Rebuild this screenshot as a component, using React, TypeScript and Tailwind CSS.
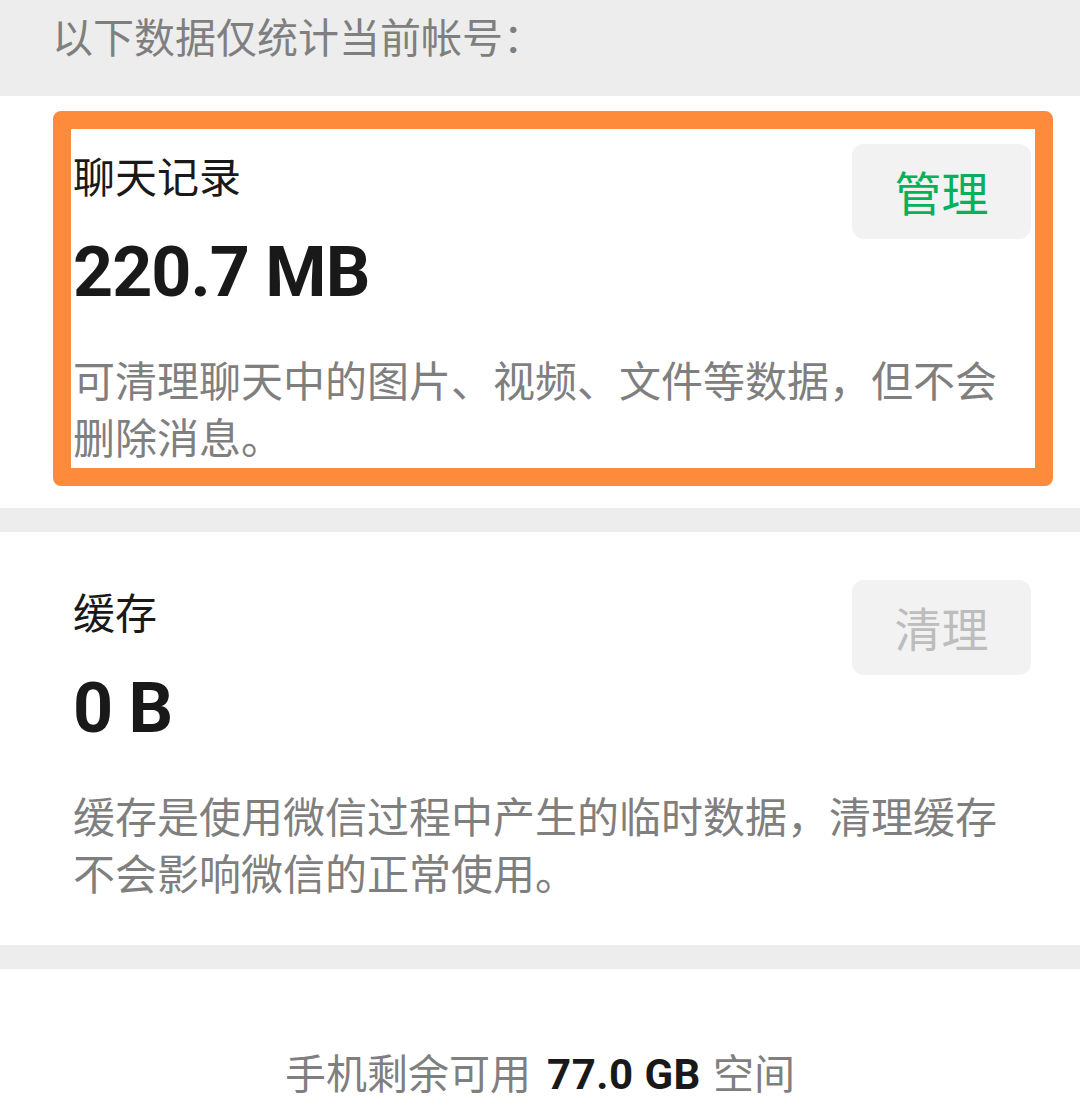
import React from "react";

const cjk = { fontFamily: '"Noto Sans CJK SC", "Noto Sans", sans-serif' };
const num = { fontFamily: 'Roboto, "Noto Sans CJK SC", sans-serif' };

function Section({
  title,
  value,
  desc,
  button,
  active,
  height,
  children,
}: {
  title: string;
  value: string;
  desc: string;
  button: string;
  active: boolean;
  height: string;
  children?: React.ReactNode;
}) {
  return (
    <div className={`relative bg-white pt-[48px] pl-[73px] pr-[49px] ${height}`}>
      <div className="flex items-start justify-between">
        <div className="pt-[3px]">
          <div className="text-[42px] leading-[56px] text-[#191919]" style={cjk}>
            {title}
          </div>
          <div
            className="mt-[29px] text-[70px] leading-[80px] font-bold tracking-[-1px] text-[#191919]"
            style={num}
          >
            {value}
          </div>
        </div>
        <button
          className={`flex h-[95px] w-[179px] items-center justify-center rounded-[12px] bg-[#f2f2f2] text-[47px] ${
            active ? "text-[#07b05a]" : "text-[#bdbdbd]"
          }`}
          style={cjk}
        >
          {button}
        </button>
      </div>
      <p className="mt-[38px] text-[42px] leading-[57px] text-[#7f7f7f]" style={cjk}>
        {desc}
      </p>
      {children}
    </div>
  );
}

export default function App() {
  return (
    <div className="flex h-[1114px] w-[1080px] flex-col overflow-hidden bg-[#ededed]">
      <div className="h-[96px] pl-[52px] pt-[7px]">
        <div className="text-[41px] leading-[56px] text-[#7f7f7f]" style={cjk}>
          以下数据仅统计当前帐号：
        </div>
      </div>
      <Section
        title="聊天记录"
        value="220.7 MB"
        desc="可清理聊天中的图片、视频、文件等数据，但不会删除消息。"
        button="管理"
        active
        height="h-[412px]"
      >
        <div className="pointer-events-none absolute left-[53px] top-[15px] h-[375px] w-[1000px] rounded-[8px] border-[18px] border-[#fe8b3b]" />
      </Section>
      <div className="h-[24px]" />
      <Section
        title="缓存"
        value="0 B"
        desc="缓存是使用微信过程中产生的临时数据，清理缓存不会影响微信的正常使用。"
        button="清理"
        active={false}
        height="h-[413px]"
      />
      <div className="h-[24px]" />
      <div className="flex-1 bg-white pt-[74px]">
        <div
          className="flex items-baseline justify-center text-[41px] leading-[56px] text-[#7f7f7f]"
          style={cjk}
        >
          <span>手机剩余可用</span>
          <span
            className="ml-[16px] mr-[12px] text-[42px] font-bold tracking-[0.5px] text-[#191919]"
            style={num}
          >
            77.0 GB
          </span>
          <span>空间</span>
        </div>
      </div>
    </div>
  );
}
